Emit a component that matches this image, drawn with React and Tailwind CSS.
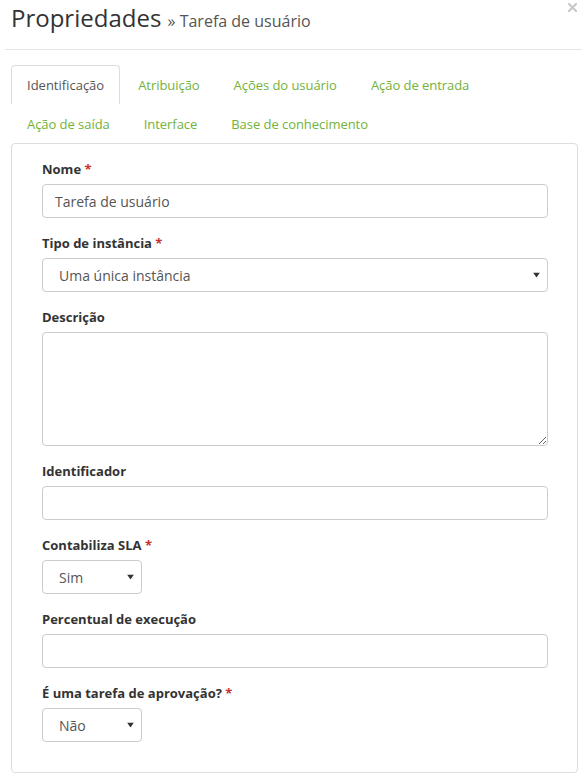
import React from "react";

function Arrow() {
  return (
    <svg className="pointer-events-none absolute top-1/2 -translate-y-1/2" style={{ right: 8 }} width="7" height="5" viewBox="0 0 7 5">
      <path d="M0 0 L7 0 L3.5 5 Z" fill="#333" />
    </svg>
  );
}

function Label({ children, req }) {
  return (
    <label className="block h-[18px] mb-[6px] text-[13px] leading-[18px] font-bold text-[#333]">
      {children}
      {req && <span className="text-[#c9302c]"> *</span>}
    </label>
  );
}

function Select({ value, wide }) {
  return (
    <div className={"relative " + (wide ? "w-full" : "w-[100px]")}>
      <select
        defaultValue={value}
        className="appearance-none w-full h-[34px] rounded-[4px] border border-[#ccc] bg-white pl-[16px] pr-[20px] text-[14px] text-[#555] outline-none"
      >
        <option>{value}</option>
      </select>
      <Arrow />
    </div>
  );
}

export default function App() {
  const tabs1 = ["Atribuição", "Ações do usuário", "Ação de entrada"];
  const tabs2 = ["Ação de saída", "Interface", "Base de conhecimento"];
  return (
    <div className="w-[582px] h-[777px] bg-white font-['Open_Sans',sans-serif] overflow-hidden">
      <div className="ml-[5px] h-[50px] border-b border-[#e5e5e5] flex items-start justify-between pl-[6px]">
        <h1 className="pt-[4px] text-[24px] leading-[28px] text-[#333] font-normal">
          Propriedades <span className="text-[16px] text-[#555]">» Tarefa de usuário</span>
        </h1>
        <svg className="mt-[3px] mr-[5px]" width="9" height="9" viewBox="0 0 9 9" aria-label="Fechar">
          <path d="M1 1 L8 8 M8 1 L1 8" stroke="#c8c8c8" strokeWidth="2.2" strokeLinecap="square" />
        </svg>
      </div>

      <div className="ml-[11px] mr-[4px] mt-[15px] flex flex-wrap">
        <div className="h-[39px] px-[15px] mr-[2px] text-[13px] leading-[38px] border border-b-0 border-[#ddd] rounded-t-[4px] bg-white text-[#555]">
          Identificação
        </div>
        {tabs1.map((t) => (
          <div key={t} className="h-[39px] px-[15px] mr-[2px] text-[13px] tracking-[-0.05px] leading-[38px] border border-b-0 border-transparent text-[#72b23a]">
            {t}
          </div>
        ))}
        <div className="basis-full h-0" />
        {tabs2.map((t) => (
          <div key={t} className="h-[39px] px-[15px] mr-[2px] text-[13px] tracking-[-0.05px] leading-[38px] border border-b-0 border-transparent text-[#72b23a]">
            {t}
          </div>
        ))}
      </div>

      <div className="ml-[11px] mr-[4px] border border-[#ddd] rounded-[4px] pt-[16px] pl-[30px] pr-[29px] pb-[14px]">
        <div className="mb-[16px]">
          <Label req>Nome</Label>
          <input
            defaultValue="Tarefa de usuário"
            className="w-full h-[34px] rounded-[4px] border border-[#ccc] px-[12px] text-[14px] text-[#555] outline-none"
          />
        </div>
        <div className="mb-[16px]">
          <Label req>Tipo de instância</Label>
          <Select value="Uma única instância" wide />
        </div>
        <div className="mb-[16px]">
          <Label>Descrição</Label>
          <textarea className="block w-full h-[114px] rounded-[4px] border border-[#ccc] px-[12px] py-[6px] text-[14px] text-[#555] outline-none" />
        </div>
        <div className="mb-[16px]">
          <Label>Identificador</Label>
          <input className="w-full h-[34px] rounded-[4px] border border-[#ccc] px-[12px] text-[14px] text-[#555] outline-none" />
        </div>
        <div className="mb-[16px]">
          <Label req>Contabiliza SLA</Label>
          <Select value="Sim" />
        </div>
        <div className="mb-[16px]">
          <Label>Percentual de execução</Label>
          <input className="w-full h-[34px] rounded-[4px] border border-[#ccc] px-[12px] text-[14px] text-[#555] outline-none" />
        </div>
        <div className="mb-[16px]">
          <Label req>É uma tarefa de aprovação?</Label>
          <Select value="Não" />
        </div>
      </div>
    </div>
  );
}
